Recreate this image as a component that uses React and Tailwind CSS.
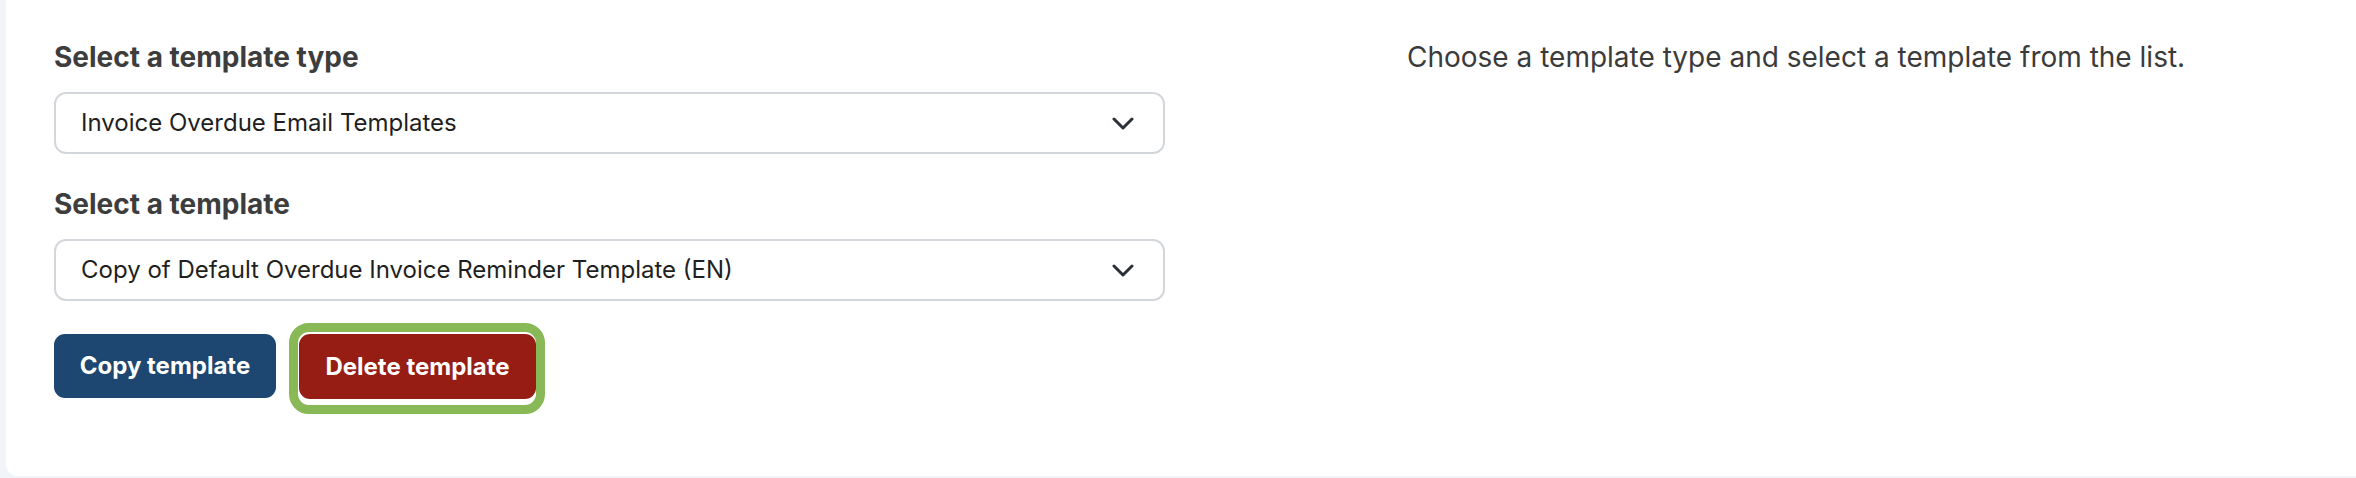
import React from "react";

function Chevron() {
  return (
    <svg width="22" height="13" viewBox="0 0 22 13" fill="none" className="shrink-0">
      <polyline points="2,2 11,11 20,2" stroke="#2b2f36" strokeWidth="3" strokeLinecap="round" strokeLinejoin="round" />
    </svg>
  );
}

function SelectBox({ value }) {
  return (
    <div className="flex h-[62px] w-full items-center justify-between rounded-[12px] border-2 border-[#d3d7dc] bg-white pl-[25px] pr-[29px]">
      <span className="text-[24px] leading-[36px] text-[#1f1f1f]">{value}</span>
      <Chevron />
    </div>
  );
}

export default function App() {
  return (
    <div className="h-[478px] w-[2356px] bg-[#f1f4f8] pl-[6px] pb-[2px] font-['Inter',sans-serif]">
      <div className="flex h-full w-full rounded-bl-[12px] bg-white pl-[48px] pt-[39px]">
        <div className="flex w-[1111px] flex-col">
          <h2 className="text-[28px] font-bold leading-[36px] text-[#3d3d3d]">Select a template type</h2>
          <div className="mt-[17px]">
            <SelectBox value="Invoice Overdue Email Templates" />
          </div>
          <h2 className="mt-[32px] text-[28px] font-bold leading-[36px] text-[#3d3d3d]">Select a template</h2>
          <div className="mt-[17px]">
            <SelectBox value="Copy of Default Overdue Invoice Reminder Template (EN)" />
          </div>
          <div className="mt-[33px] flex items-start gap-[23px]">
            <button className="h-[64px] w-[222px] rounded-[11px] bg-[#1d4670] text-[24px] font-bold text-white">
              Copy template
            </button>
            <div className="relative">
              <button className="h-[65px] w-[237px] rounded-[11px] bg-[#961d14] text-[24px] font-bold text-white">
                Delete template
              </button>
              <div className="pointer-events-none absolute -left-[10px] -right-[9px] -top-[11px] -bottom-[15px] rounded-[20px] border-[9px] border-[#88b956]"></div>
            </div>
          </div>
        </div>
        <div className="ml-[242px]">
          <p className="text-[28px] leading-[36px] text-[#3b3b3b]">
            Choose a template type and select a template from the list.
          </p>
        </div>
      </div>
    </div>
  );
}
